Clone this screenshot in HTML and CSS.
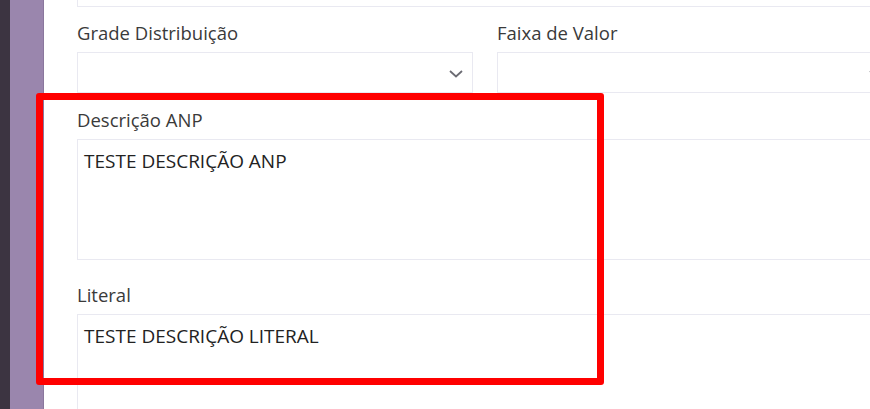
FILE: index.html
```html
<!DOCTYPE html>
<html lang="pt-BR">
<head>
<meta charset="utf-8">
<title>Formulário</title>
<link rel="stylesheet" href="styles.css">
</head>
<body>
<div class="shell">
  <div class="rail"></div>
  <div class="nav"></div>
  <main class="main">
    <div class="form">
      <div class="field-top"></div>
      <div class="row two">
        <div class="group">
          <div class="label">Grade Distribuição</div>
          <div class="select">
            <svg class="chev" width="16" height="10" viewBox="0 0 16 10"><path d="M2 2 L8 7.5 L14 2" fill="none" stroke="#6b6b73" stroke-width="1.8"/></svg>
          </div>
        </div>
        <div class="group">
          <div class="label">Faixa de Valor</div>
          <div class="select">
            <svg class="chev" width="16" height="10" viewBox="0 0 16 10"><path d="M2 2 L8 7.5 L14 2" fill="none" stroke="#6b6b73" stroke-width="1.8"/></svg>
          </div>
        </div>
      </div>
      <div class="row gap-a">
        <div class="group">
          <div class="label">Descrição ANP</div>
          <div class="area">TESTE DESCRIÇÃO ANP</div>
        </div>
      </div>
      <div class="row gap-b">
        <div class="group">
          <div class="label">Literal</div>
          <div class="area">TESTE DESCRIÇÃO LITERAL</div>
        </div>
      </div>
    </div>
  </main>
</div>
<div class="highlight"></div>
</body>
</html>
```

FILE: styles.css
```css
html, body {
  margin: 0;
  padding: 0;
  width: 870px;
  height: 409px;
  overflow: hidden;
  background: #ffffff;
}

body {
  position: relative;
  font-family: "Open Sans", "Noto Sans", sans-serif;
  color: #333333;
}

.shell {
  display: flex;
  height: 409px;
}

.rail {
  width: 10px;
  flex: none;
  background: #3c3441;
}

.nav {
  width: 33px;
  flex: none;
  background: #9a86ad;
  border-right: 1px solid #8a779d;
}

.main {
  flex: 1;
  min-width: 0;
  overflow: hidden;
  padding-left: 33px;
  background: #ffffff;
}

.form {
  width: 816px;
}

.field-top {
  height: 6px;
  border: 1px solid #e9e9f1;
  border-top: none;
}

.row {
  display: grid;
  grid-template-columns: 1fr;
}

.row.two {
  grid-template-columns: 396px 396px;
  column-gap: 24px;
  margin-top: 14px;
}

.row.gap-a {
  margin-top: 15px;
}

.row.gap-b {
  margin-top: 23px;
}

.group {
  display: flex;
  flex-direction: column;
  gap: 7px;
}

.label {
  font-size: 18.5px;
  line-height: 24px;
  height: 24px;
  color: #3a3a3a;
}

.select {
  height: 39px;
  border: 1px solid #e9e9f1;
  display: flex;
  align-items: center;
  justify-content: flex-end;
  padding-right: 8px;
}

.chev {
  display: block;
  margin-top: 3px;
}

.area {
  height: 110px;
  border: 1px solid #e9e9f1;
  padding: 9px 6px 0;
  font-size: 19px;
  line-height: 24px;
  color: #222222;
}

.highlight {
  position: absolute;
  left: 36px;
  top: 93px;
  width: 554px;
  height: 278px;
  border: 7px solid #ff0000;
  border-radius: 3px;
}
```
